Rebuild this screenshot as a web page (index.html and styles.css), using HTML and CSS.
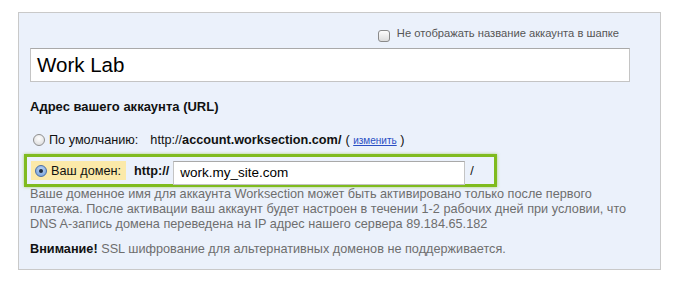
FILE: index.html
```html
<!DOCTYPE html>
<html lang="ru">
<head>
    <meta charset="UTF-8">
    <link rel="stylesheet" href="styles.css">
</head>
<body>
<div class="panel">
    <div class="hide-name">
        <span class="checkbox"></span>
        <span class="hide-label">Не отображать название аккаунта в шапке</span>
    </div>
    <div class="title-input">Work Lab</div>

    <h3 class="section-title">Адрес вашего аккаунта (URL)</h3>

    <div class="option-row">
        <span class="radio"></span>
        <span class="option-label">По умолчанию:</span>
        <span class="url">http://<b>account.worksection.com/</b></span>
        <span class="change">( <a href="#">изменить</a> )</span>
    </div>

    <div class="domain-box">
        <span class="domain-choice">
            <span class="radio checked"></span>
            <span class="option-label">Ваш домен:</span>
        </span>
        <b class="protocol">http://</b>
        <div class="domain-input">work.my_site.com</div>
        <span class="slash">/</span>
    </div>

    <p class="note">Ваше доменное имя для аккаунта Worksection может быть активировано только после первого<br>
    платежа. После активации ваш аккаунт будет настроен в течении 1-2 рабочих дней при условии, что<br>
    DNS A-запись домена переведена на IP адрес нашего сервера 89.184.65.182</p>

    <p class="note warning"><b>Внимание!</b> SSL шифрование для альтернативных доменов не поддерживается.</p>
</div>
</body>
</html>
```

FILE: styles.css
```css
body {
    margin: 0;
    background-color: #fff;
    font-family: "Liberation Sans", Arial, sans-serif;
    color: #111;
}

.panel {
    margin: 12px 0 0 18px;
    width: 600px;
    height: 243px;
    padding: 13px 30px 0 11px;
    background-color: #ebf1fb;
    border: 1px solid #c9c9c9;
}

/* top checkbox */
.hide-name {
    display: flex;
    justify-content: flex-end;
    align-items: flex-start;
    padding-right: 11px;
    height: 22px;
}

.checkbox {
    width: 10px;
    height: 10px;
    margin-right: 7px;
    margin-top: 4px;
    border: 1px solid #8a8a8a;
    border-radius: 3px;
    background: linear-gradient(#fdfdfd, #dcdcdc);
}

.hide-label {
    font-size: 11.2px;
    line-height: 14px;
    color: #555;
}

.title-input {
    height: 32px;
    line-height: 32px;
    padding-left: 6px;
    font-size: 20.5px;
    color: #000;
    background-color: #fff;
    border: 1px solid #c4c4c4;
    border-top-color: #a9a9a9;
}

.section-title {
    margin: 17px 0 0;
    font-size: 13px;
    font-weight: bold;
    color: #111;
}

/* radio rows */
.option-row {
    display: flex;
    align-items: center;
    margin-top: 18px;
    padding-left: 3px;
    height: 16px;
    font-size: 12.7px;
}

.radio {
    width: 10px;
    height: 10px;
    border: 1px solid #8e8e8e;
    border-radius: 50%;
    background: radial-gradient(circle at 50% 35%, #fff, #d6d6d6);
    margin-right: 4px;
    display: inline-flex;
    align-items: center;
    justify-content: center;
}

.radio.checked {
    border-color: #4a6fa8;
    background: radial-gradient(circle at 50% 35%, #bcd4f3, #6d9ad8);
}

.radio.checked::after {
    content: "";
    width: 4px;
    height: 4px;
    border-radius: 50%;
    background-color: #1d2a40;
}

.url {
    margin-left: 12px;
}

.change {
    margin-left: 4px;
}

.change a {
    font-size: 10px;
    color: #2a4fc4;
}

/* own domain */
.domain-box {
    display: flex;
    align-items: center;
    margin: 6px 0 0 -6px;
    width: 464px;
    height: 27px;
    padding-left: 3px;
    border: 3px solid #7fbb1e;
    box-shadow: 0 0 3px rgba(127, 187, 30, 0.6);
    font-size: 12.7px;
}

.domain-choice {
    display: flex;
    align-items: center;
    height: 19px;
    margin-left: 1px;
    padding: 0 5px 0 4px;
    background-color: #fbe9a9;
}

.protocol {
    margin-left: 8px;
}

.domain-input {
    margin: 4px 0 0 4px;
    width: 284px;
    height: 22px;
    line-height: 22px;
    padding-left: 6px;
    font-size: 13.5px;
    color: #000;
    background-color: #fff;
    border: 1px solid #c4c4c4;
    border-top-color: #a9a9a9;
}

.slash {
    margin-left: 5px;
}

.note {
    margin: 0;
    font-size: 12.7px;
    line-height: 15px;
    color: #6e6e6e;
    white-space: nowrap;
}

.note.warning {
    margin-top: 10px;
}

.note b {
    color: #111;
}
```
